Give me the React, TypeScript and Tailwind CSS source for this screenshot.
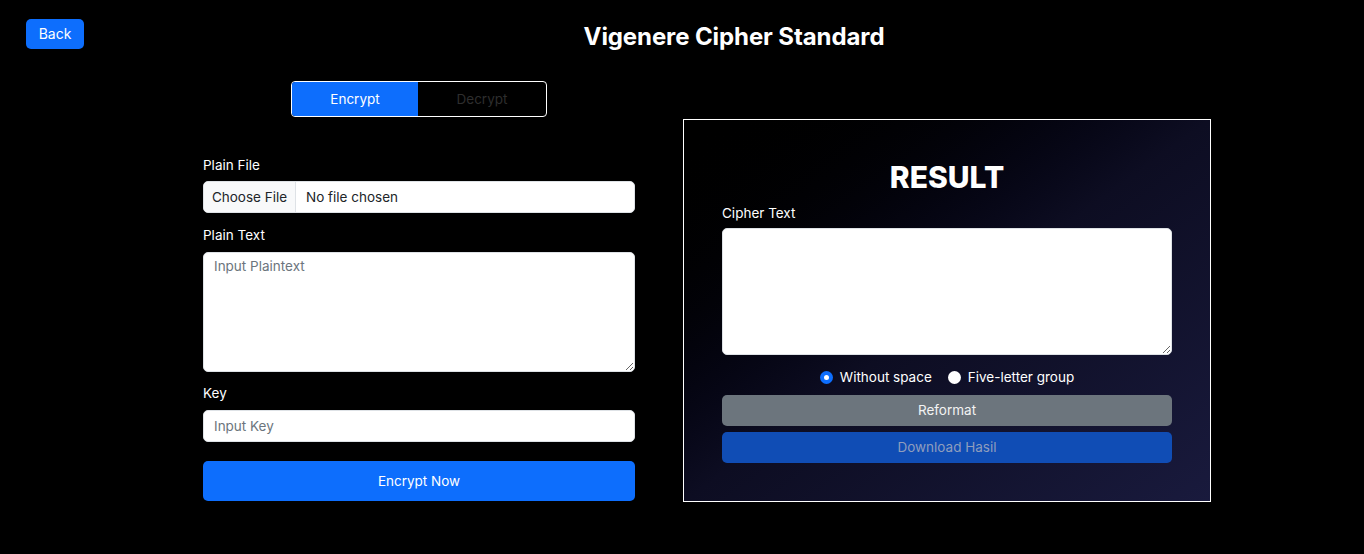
import React from "react";

export default function App() {
  const font = { fontFamily: "Inter, 'Noto Sans', sans-serif" };
  return (
    <div className="w-[1364px] h-[554px] bg-black text-white overflow-hidden" style={font}>
      <div className="flex items-start pt-[19px]">
        <button className="ml-[26px] h-[30px] w-[58px] rounded-[5px] bg-[#0d6efd] text-[14px] text-white leading-none">
          Back
        </button>
        <div className="ml-[450px] w-[400px] text-center pt-[4px]">
          <h1 className="text-[24px] font-bold leading-[28px] tracking-[-0.1px]">Vigenere Cipher Standard</h1>
        </div>
      </div>

      <div className="flex items-start ml-[203px] gap-[48px] mt-[30px]">
        {/* Left column */}
        <div className="w-[432px] flex flex-col">
          <div className="flex justify-center">
            <div className="flex w-[256px] h-[36px] border border-white rounded-[4px] overflow-hidden">
              <div className="w-[126px] bg-[#0d6efd] flex items-center justify-center text-[13.5px] text-white">Encrypt</div>
              <div className="flex-1 flex items-center justify-center text-[13.5px] text-[#2e2e2e]">Decrypt</div>
            </div>
          </div>

          <label className="mt-[38px] text-[13.5px] leading-[21px] mb-[5px]">Plain File</label>
          <div className="h-[32px] flex bg-white rounded-[5px] border border-[#dee2e6] overflow-hidden text-[13.5px] text-[#212529]">
            <div className="w-[92px] bg-[#f8f9fa] border-r border-[#dee2e6] flex items-center justify-center">Choose File</div>
            <div className="flex items-center pl-[10px]">No file chosen</div>
          </div>

          <label className="mt-[12px] text-[13.5px] leading-[21px] mb-[6px]">Plain Text</label>
          <textarea
            placeholder="Input Plaintext"
            className="h-[120px] w-full rounded-[5px] bg-white border border-[#dee2e6] px-[10px] py-[3px] text-[13.5px] text-[#212529] placeholder:text-[#6c757d] outline-none"
          />

          <label className="mt-[11px] text-[13.5px] leading-[21px] mb-[6px]">Key</label>
          <input
            placeholder="Input Key"
            className="h-[32px] w-full rounded-[5px] bg-white border border-[#dee2e6] px-[10px] text-[13.5px] text-[#212529] placeholder:text-[#6c757d] outline-none"
          />

          <button className="mt-[19px] h-[40px] w-full rounded-[5px] bg-[#0d6efd] text-[13.5px] text-white">Encrypt Now</button>
        </div>

        {/* Right panel */}
        <div className="mt-[38px] w-[528px] h-[383px] border border-white bg-gradient-to-br from-[#000000] via-[#0d0d22] to-[#191a3d] px-[38px] pt-[38px] flex flex-col">
          <h2 className="text-center text-[30px] font-extrabold leading-[38px]">RESULT</h2>
          <label className="mt-[7px] text-[13.5px] leading-[21px] mb-[4px]">Cipher Text</label>
          <textarea className="h-[127px] w-full rounded-[5px] bg-white border border-[#dee2e6] outline-none" />
          <div className="mt-[12px] h-[21px] flex items-center justify-center gap-[16px] text-[13.5px]">
            <div className="flex items-center gap-[7px]">
              <span className="w-[13px] h-[13px] rounded-full bg-[#0d6efd] flex items-center justify-center">
                <span className="w-[5px] h-[5px] rounded-full bg-white" />
              </span>
              <span>Without space</span>
            </div>
            <div className="flex items-center gap-[7px]">
              <span className="w-[13px] h-[13px] rounded-full bg-white" />
              <span>Five-letter group</span>
            </div>
          </div>
          <button className="mt-[7px] h-[31px] w-full rounded-[5px] bg-[#6c757d] text-[13.5px] text-[#f3f3f3]">Reformat</button>
          <button className="mt-[6px] h-[31px] w-full rounded-[5px] bg-[#104db5] text-[13.5px] text-[#8f9dbd]">Download Hasil</button>
        </div>
      </div>
    </div>
  );
}
